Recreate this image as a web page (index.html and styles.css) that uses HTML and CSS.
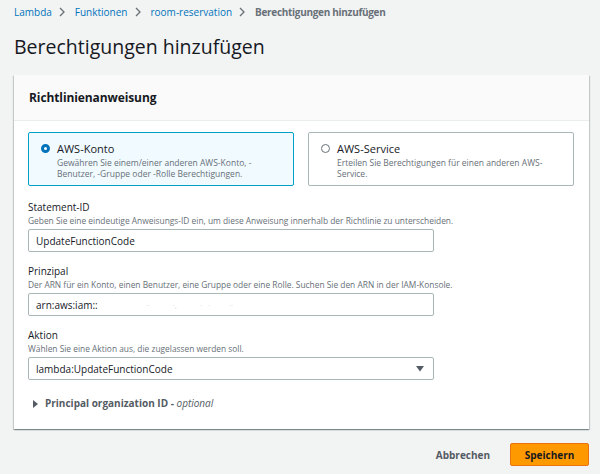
FILE: index.html
```html
<!DOCTYPE html>
<html lang="de">
<head>
<meta charset="utf-8">
<title>Berechtigungen hinzufügen</title>
<link rel="stylesheet" href="styles.css">
</head>
<body>
<div class="page">
  <nav class="crumbs">
    <a class="crumb-link" href="#">Lambda</a>
    <svg class="chev" width="6" height="10" viewBox="0 0 6 10"><path d="M1 1l4 4-4 4" fill="none" stroke="#687078" stroke-width="1.3"/></svg>
    <a class="crumb-link" href="#">Funktionen</a>
    <svg class="chev" width="6" height="10" viewBox="0 0 6 10"><path d="M1 1l4 4-4 4" fill="none" stroke="#687078" stroke-width="1.3"/></svg>
    <a class="crumb-link" href="#">room-reservation</a>
    <svg class="chev" width="6" height="10" viewBox="0 0 6 10"><path d="M1 1l4 4-4 4" fill="none" stroke="#687078" stroke-width="1.3"/></svg>
    <span class="crumb-current">Berechtigungen hinzufügen</span>
  </nav>

  <h1 class="title">Berechtigungen hinzufügen</h1>

  <section class="card">
    <header class="card-header">Richtlinienanweisung</header>
    <div class="card-body">
      <div class="tiles">
        <div class="tile tile-selected">
          <span class="radio radio-on"></span>
          <div class="tile-text">
            <div class="tile-title">AWS-Konto</div>
            <div class="tile-desc">Gewähren Sie einem/einer anderen AWS-Konto, -<br>Benutzer, -Gruppe oder -Rolle Berechtigungen.</div>
          </div>
        </div>
        <div class="tile">
          <span class="radio"></span>
          <div class="tile-text">
            <div class="tile-title">AWS-Service</div>
            <div class="tile-desc">Erteilen Sie Berechtigungen für einen anderen AWS-<br>Service.</div>
          </div>
        </div>
      </div>

      <div class="field">
        <div class="label">Statement-ID</div>
        <div class="desc">Geben Sie eine eindeutige Anweisungs-ID ein, um diese Anweisung innerhalb der Richtlinie zu unterscheiden.</div>
        <div class="input">UpdateFunctionCode</div>
      </div>

      <div class="field">
        <div class="label">Prinzipal</div>
        <div class="desc">Der ARN für ein Konto, einen Benutzer, eine Gruppe oder eine Rolle. Suchen Sie den ARN in der IAM-Konsole.</div>
        <div class="input">arn:aws:iam::<span class="redacted">·· &nbsp; &nbsp; &nbsp; &nbsp; &nbsp; ·, &nbsp; &nbsp; &nbsp; &nbsp; &nbsp; · &nbsp; · &nbsp; &nbsp; &nbsp; &nbsp; ··</span></div>
      </div>

      <div class="field">
        <div class="label">Aktion</div>
        <div class="desc">Wählen Sie eine Aktion aus, die zugelassen werden soll.</div>
        <div class="input select">
          <span>lambda:UpdateFunctionCode</span>
          <svg class="caret" width="8" height="6" viewBox="0 0 8 6"><path d="M0 0h8L4 5.5z" fill="#545b64"/></svg>
        </div>
      </div>

      <div class="expander">
        <svg class="expander-icon" width="5" height="8" viewBox="0 0 5 8"><path d="M0 0l5 4-5 4z" fill="#545b64"/></svg>
        <span>Principal organization ID - <em>optional</em></span>
      </div>
    </div>
  </section>

  <div class="actions">
    <button class="btn-link">Abbrechen</button>
    <button class="btn-primary">Speichern</button>
  </div>
</div>
</body>
</html>
```

FILE: styles.css
```css
html, body {
  margin: 0;
  padding: 0;
}

body {
  background: #f2f3f3;
  font-family: "Open Sans", "Noto Sans", sans-serif;
  color: #16191f;
}

.page {
  padding: 0 11px 0 14px;
}

.crumbs {
  height: 24px;
  display: flex;
  align-items: center;
  font-size: 10px;
}

.crumb-link {
  color: #0073bb;
  text-decoration: none;
}

.chev {
  margin: 0 10px 0 7px;
}

.crumb-current {
  color: #687078;
  font-weight: 700;
  letter-spacing: -0.3px;
}

.title {
  margin: 11px 0 0;
  font-size: 19.5px;
  line-height: 24px;
  font-weight: 400;
  color: #16191f;
}

.card {
  margin-top: 16px;
  background: #fff;
  box-shadow: 0 1px 1px 0 rgba(0, 28, 36, 0.3), 1px 1px 1px 0 rgba(0, 28, 36, 0.15), -1px 1px 1px 0 rgba(0, 28, 36, 0.15);
}

.card-header {
  height: 45px;
  display: flex;
  align-items: center;
  padding: 0 15px;
  background: #fafafa;
  border-bottom: 1px solid #eaeded;
  font-size: 12px;
  font-weight: 700;
  letter-spacing: -0.1px;
}

.card-body {
  padding: 11px 15px 18px 14px;
}

.tiles {
  display: grid;
  grid-template-columns: 1fr 1fr;
  gap: 14px;
}

.tile {
  height: 54px;
  box-sizing: border-box;
  border: 1px solid #aab7b8;
  border-radius: 2px;
  display: flex;
  align-items: flex-start;
  padding: 9px 12px 0 12px;
}

.tile-selected {
  background: #f1faff;
  border-color: #00a1c9;
}

.radio {
  flex: none;
  width: 9px;
  height: 9px;
  box-sizing: border-box;
  border: 1px solid #687078;
  border-radius: 50%;
  background: #fff;
  margin-top: 2px;
  margin-right: 7px;
}

.radio-on {
  border: 3px solid #0073bb;
}

.tile-title {
  font-size: 11px;
  line-height: 13px;
}

.tile-desc {
  margin-top: 2px;
  font-size: 8.5px;
  line-height: 11px;
  color: #687078;
}

.field {
  margin-top: 12px;
}

.tiles + .field {
  margin-top: 14px;
}

.label {
  font-size: 10px;
  line-height: 15px;
}

.desc {
  font-size: 8.4px;
  line-height: 12px;
  color: #687078;
}

.input {
  margin-top: 2px;
  width: 406px;
  height: 23px;
  box-sizing: border-box;
  border: 1px solid #aab7b8;
  border-radius: 2px;
  background: #fff;
  padding: 0 7px;
  display: flex;
  align-items: center;
  font-size: 10px;
  white-space: pre;
}

.redacted {
  margin-left: 48px;
  font-size: 8px;
  color: #d5dbdb;
}

.select {
  justify-content: space-between;
  padding-right: 9px;
}

.expander {
  margin-top: 16px;
  display: flex;
  align-items: center;
  font-size: 10px;
  line-height: 15px;
  font-weight: 700;
  color: #545b64;
  padding-left: 5px;
}

.expander-icon {
  margin-right: 7px;
}

.expander em {
  font-weight: 400;
  font-style: italic;
}

.actions {
  margin-top: 14px;
  display: flex;
  justify-content: flex-end;
  align-items: center;
  gap: 20px;
}

.btn-link {
  background: none;
  border: none;
  padding: 0;
  font-family: inherit;
  font-size: 10px;
  font-weight: 700;
  color: #545b64;
}

.btn-primary {
  width: 79px;
  height: 23px;
  background: #ff9900;
  border: 1px solid #ec7211;
  border-radius: 2px;
  font-family: inherit;
  font-size: 10px;
  font-weight: 700;
  color: #16191f;
  padding: 0;
}
```
